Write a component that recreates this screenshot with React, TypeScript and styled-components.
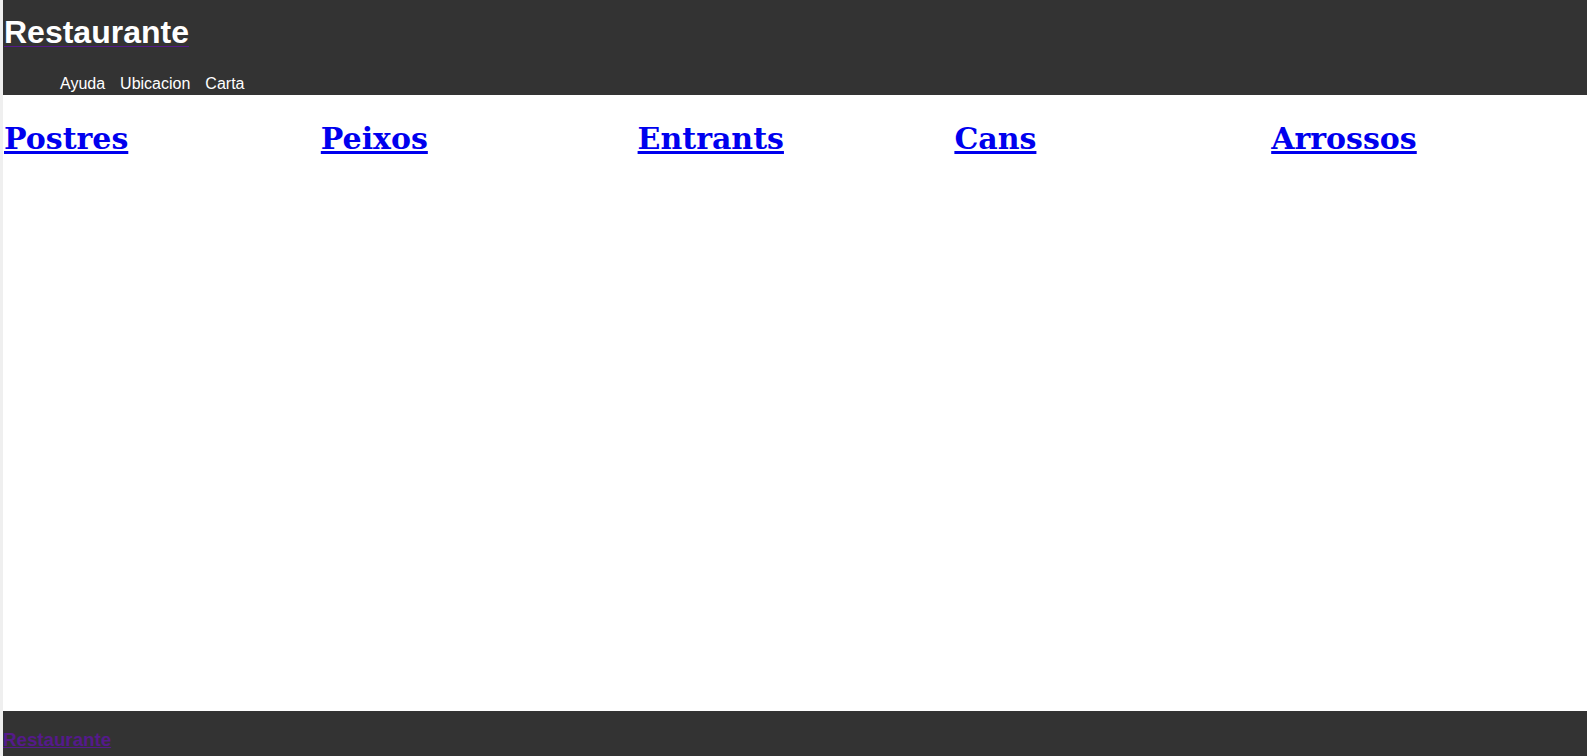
import React from "react";
import styled, { createGlobalStyle } from "styled-components";

const Global = createGlobalStyle`
  html, body { margin: 0; padding: 0; }
  body {
    background: #efefef;
    font-family: "Liberation Sans", Arial, sans-serif;
  }
`;

const Page = styled.div`
  margin-left: 3px;
  min-height: 756px;
  display: flex;
  flex-direction: column;
  background: #ffffff;
`;

const Header = styled.header`
  background: #333333;
  height: 95px;
  box-sizing: border-box;
  padding-top: 14px;
  display: flex;
  flex-direction: column;
`;

const Title = styled.h1`
  margin: 0;
  font-size: 32px;
  font-weight: bold;
  line-height: 36px;
  padding-left: 1px;
`;

const TitleLink = styled.a`
  color: #ffffff;
  text-decoration: underline;
  text-decoration-color: #551a8b;
  text-decoration-thickness: 1px;
  text-underline-offset: 3px;
`;

const Nav = styled.ul`
  list-style: none;
  margin: 25px 0 0 0;
  padding: 0 0 0 57px;
  display: flex;
  gap: 15px;
`;

const NavItem = styled.li`
  color: #ffffff;
  font-size: 16px;
  line-height: 18px;
`;

const Main = styled.main`
  flex: 1;
  display: grid;
  grid-template-columns: repeat(5, 1fr);
  align-content: start;
  padding-top: 26px;
  height: 616px;
  box-sizing: border-box;
`;

const Category = styled.h1`
  margin: 0;
  padding-left: 1px;
  font-family: "DejaVu Serif", serif;
  font-size: 30px;
  font-weight: bold;
  line-height: 35px;
`;

const CategoryLink = styled.a`
  color: #0000ee;
  text-decoration: underline;
`;

const Footer = styled.footer`
  background: #333333;
  height: 45px;
  box-sizing: border-box;
  padding-top: 18px;
  overflow: hidden;
`;

const FooterTitle = styled.h3`
  margin: 0;
  font-size: 18.72px;
  font-weight: bold;
  line-height: 22px;
`;

const FooterLink = styled.a`
  color: #551a8b;
  text-decoration: underline;
`;

const categories = ["Postres", "Peixos", "Entrants", "Cans", "Arrossos"];

export default function App() {
  return (
    <>
      <Global />
      <Page>
        <Header>
          <Title>
            <TitleLink href="#">Restaurante</TitleLink>
          </Title>
          <Nav>
            <NavItem>Ayuda</NavItem>
            <NavItem>Ubicacion</NavItem>
            <NavItem>Carta</NavItem>
          </Nav>
        </Header>
        <Main>
          {categories.map((c) => (
            <Category key={c}>
              <CategoryLink href="#">{c}</CategoryLink>
            </Category>
          ))}
        </Main>
        <Footer>
          <FooterTitle>
            <FooterLink href="#">Restaurante</FooterLink>
          </FooterTitle>
        </Footer>
      </Page>
    </>
  );
}
